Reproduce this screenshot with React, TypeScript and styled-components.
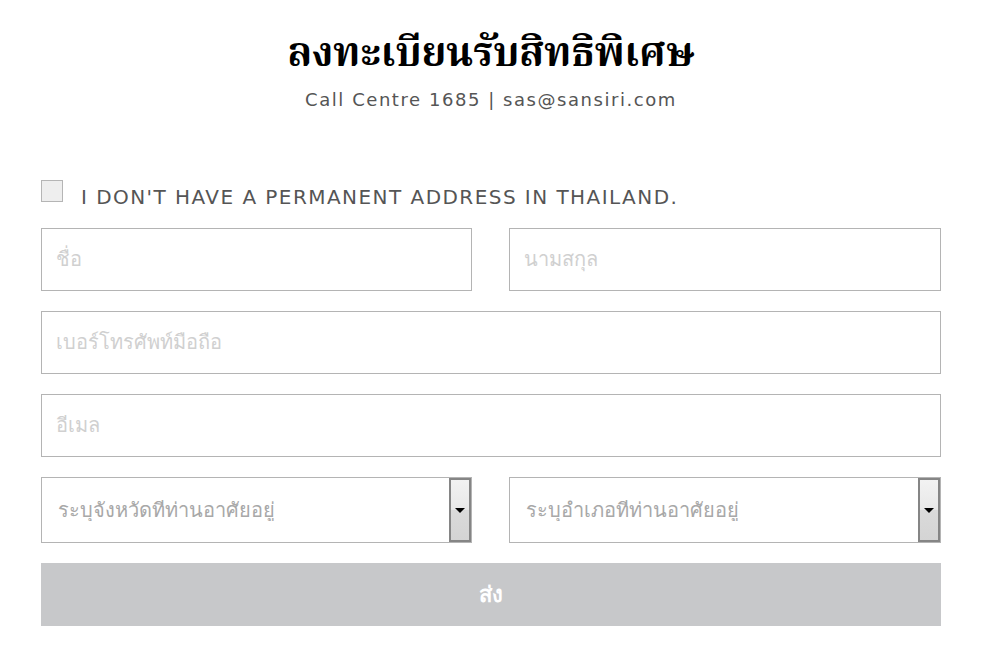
import styled, { createGlobalStyle } from 'styled-components';

const GlobalStyle = createGlobalStyle`
  html, body {
    margin: 0;
    padding: 0;
    background: #ffffff;
  }
  * {
    box-sizing: border-box;
  }
`;

export default function App() {
  return (
    <>
      <GlobalStyle />
      <Page>
        <Header>
          <Title>ลงทะเบียนรับสิทธิพิเศษ</Title>
          <Contact>Call Centre 1685 | sas@sansiri.com</Contact>
        </Header>

        <Form onSubmit={(e) => e.preventDefault()}>
          <CheckRow>
            <CheckBox type="checkbox" />
            <CheckLabel>I DON'T HAVE A PERMANENT ADDRESS IN THAILAND.</CheckLabel>
          </CheckRow>

          <Row $cols={2}>
            <Field placeholder="ชื่อ" />
            <Field placeholder="นามสกุล" />
          </Row>
          <Row $cols={1}>
            <Field placeholder="เบอร์โทรศัพท์มือถือ" />
          </Row>
          <Row $cols={1}>
            <Field placeholder="อีเมล" />
          </Row>
          <Row $cols={2}>
            <SelectWrap>
              <Select defaultValue="">
                <option value="">ระบุจังหวัดที่ท่านอาศัยอยู่</option>
              </Select>
              <DropButton aria-hidden="true">
                <Arrow />
              </DropButton>
            </SelectWrap>
            <SelectWrap>
              <Select defaultValue="">
                <option value="">ระบุอำเภอที่ท่านอาศัยอยู่</option>
              </Select>
              <DropButton aria-hidden="true">
                <Arrow />
              </DropButton>
            </SelectWrap>
          </Row>

          <Submit type="submit">ส่ง</Submit>
        </Form>
      </Page>
    </>
  );
}

const Page = styled.main`
  width: 985px;
  padding: 29px 44px 28px 41px;
`;

const Header = styled.header`
  display: flex;
  flex-direction: column;
  align-items: center;
`;

const Title = styled.h1`
  margin: 0;
  color: #000;
  font-family: 'Liberation Serif', 'Noto Serif Thai', serif;
  font-size: 40px;
  font-weight: 700;
  line-height: 48px;
`;

const Contact = styled.p`
  margin: 13px 0 0;
  color: #555;
  font-family: 'DejaVu Sans', sans-serif;
  font-size: 18px;
  letter-spacing: 1.55px;
  line-height: 20px;
`;

const Form = styled.form`
  display: flex;
  flex-direction: column;
  margin-top: 70px;
`;

const CheckRow = styled.label`
  display: flex;
  align-items: center;
  gap: 18px;
  height: 26px;
  margin-bottom: 22px;
`;

const CheckBox = styled.input`
  appearance: none;
  width: 22px;
  height: 22px;
  margin: 0 0 4px;
  border: 1px solid #b5b5b5;
  background: #eeeeee;
`;

const CheckLabel = styled.span`
  color: #555;
  font-family: 'DejaVu Sans', sans-serif;
  font-size: 20px;
  letter-spacing: 1.45px;
  line-height: 22px;
  margin-top: 8px;
`;

const Row = styled.div<{ $cols: number }>`
  display: grid;
  grid-template-columns: ${(p) => (p.$cols === 2 ? '431px 1fr' : '1fr')};
  column-gap: 37px;
  margin-bottom: 20px;
`;

const Field = styled.input`
  height: 63px;
  padding: 0 14px;
  border: 1px solid #b4b4b4;
  border-radius: 0;
  background: #fff;
  font-family: 'Liberation Sans', sans-serif;
  font-size: 20px;
  outline: none;

  &::placeholder {
    color: #d0d0d0;
  }
`;

const SelectWrap = styled.div`
  position: relative;
  height: 66px;
`;

const Select = styled.select`
  appearance: none;
  width: 100%;
  height: 100%;
  padding: 0 40px 0 16px;
  border: 1px solid #b4b4b4;
  border-radius: 0;
  background: #fff;
  color: #a8a8a8;
  font-family: 'Liberation Sans', sans-serif;
  font-size: 20px;
  outline: none;
`;

const DropButton = styled.span`
  position: absolute;
  top: 1px;
  right: 1px;
  bottom: 1px;
  width: 22px;
  display: flex;
  align-items: center;
  justify-content: center;
  border: 2px solid #858585;
  background: linear-gradient(180deg, #f2f2f2 0%, #e8e8e8 49%, #dadada 50%, #d4d4d4 100%);
  pointer-events: none;
`;

const Arrow = styled.span`
  width: 0;
  height: 0;
  border-left: 5px solid transparent;
  border-right: 5px solid transparent;
  border-top: 5px solid #000;
`;

const Submit = styled.button`
  height: 63px;
  border: none;
  background: #c7c8ca;
  color: #fff;
  font-family: 'Liberation Sans', sans-serif;
  font-size: 22px;
  font-weight: 700;
  cursor: pointer;
`;
